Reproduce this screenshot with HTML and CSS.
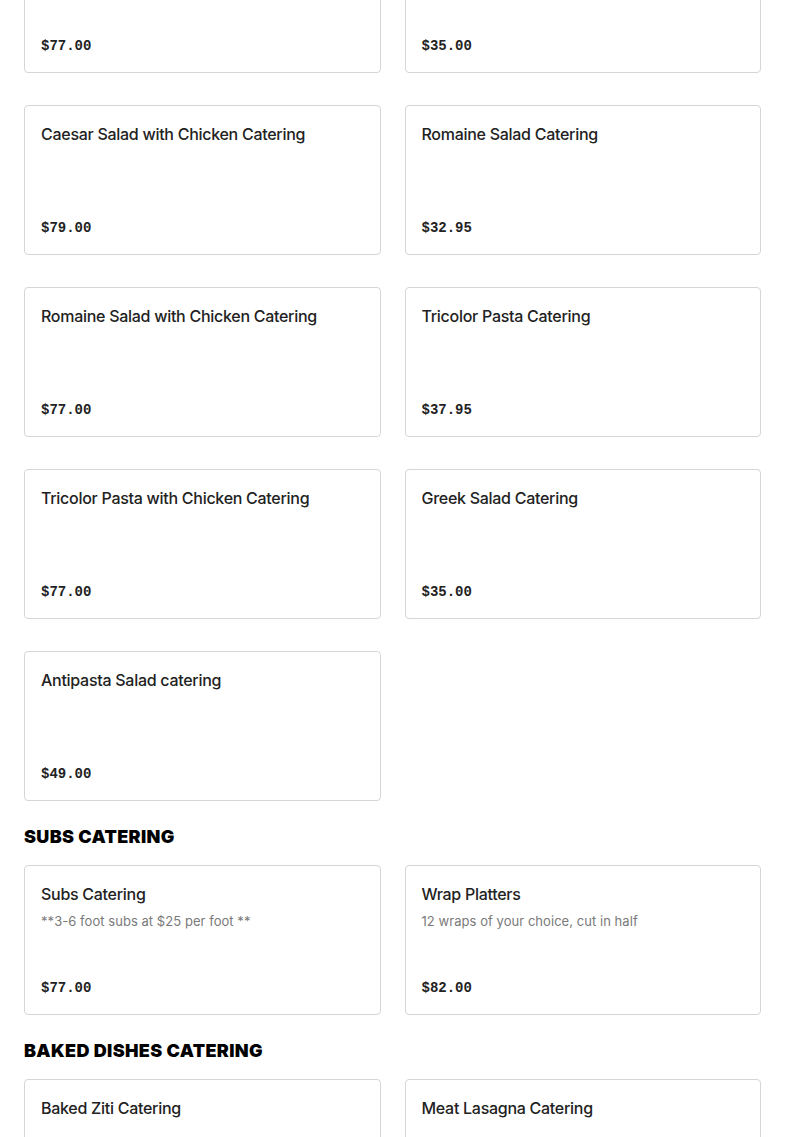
FILE: index.html
```html
<!DOCTYPE html>
<html lang="en">
<head>
<meta charset="utf-8">
<title>Catering Menu</title>
<link rel="stylesheet" href="styles.css">
</head>
<body>
<main class="menu">
  <section class="section section-first">
    <div class="grid">
      <div class="card"><div class="card-body"><h3 class="title">Garden Salad with Chicken Catering</h3></div><div class="price">$77.00</div></div>
      <div class="card"><div class="card-body"><h3 class="title">Caesar Salad Catering</h3></div><div class="price">$35.00</div></div>
      <div class="card"><div class="card-body"><h3 class="title">Caesar Salad with Chicken Catering</h3></div><div class="price">$79.00</div></div>
      <div class="card"><div class="card-body"><h3 class="title">Romaine Salad Catering</h3></div><div class="price">$32.95</div></div>
      <div class="card"><div class="card-body"><h3 class="title">Romaine Salad with Chicken Catering</h3></div><div class="price">$77.00</div></div>
      <div class="card"><div class="card-body"><h3 class="title">Tricolor Pasta Catering</h3></div><div class="price">$37.95</div></div>
      <div class="card"><div class="card-body"><h3 class="title">Tricolor Pasta with Chicken Catering</h3></div><div class="price">$77.00</div></div>
      <div class="card"><div class="card-body"><h3 class="title">Greek Salad Catering</h3></div><div class="price">$35.00</div></div>
      <div class="card"><div class="card-body"><h3 class="title">Antipasta Salad catering</h3></div><div class="price">$49.00</div></div>
    </div>
  </section>
  <section class="section">
    <h2 class="section-title">SUBS CATERING</h2>
    <div class="grid">
      <div class="card"><div class="card-body"><h3 class="title">Subs Catering</h3><p class="desc">**3-6 foot subs at $25 per foot **</p></div><div class="price">$77.00</div></div>
      <div class="card"><div class="card-body"><h3 class="title">Wrap Platters</h3><p class="desc">12 wraps of your choice, cut in half</p></div><div class="price">$82.00</div></div>
    </div>
  </section>
  <section class="section">
    <h2 class="section-title">BAKED DISHES CATERING</h2>
    <div class="grid">
      <div class="card"><div class="card-body"><h3 class="title">Baked Ziti Catering</h3></div><div class="price">$60.00</div></div>
      <div class="card"><div class="card-body"><h3 class="title">Meat Lasagna Catering</h3></div><div class="price">$85.00</div></div>
    </div>
  </section>
</main>
</body>
</html>
```
FILE: styles.css
```css
* { box-sizing: border-box; }
html, body { margin: 0; padding: 0; background: #fff; }
body {
  font-family: Inter, "Liberation Sans", Arial, sans-serif;
  color: #1f1f1f;
  overflow: hidden;
}
.menu {
  padding: 0 24px;
}
.section-first {
  margin-top: -77px;
}
.section {
  margin-bottom: 20px;
}
.section-title {
  margin: 0 0 12px;
  font-family: Inter, "Liberation Sans", sans-serif;
  font-weight: 900;
  font-size: 18px;
  line-height: 32px;
  letter-spacing: 0.35px;
  color: #000;
}
.grid {
  display: grid;
  grid-template-columns: 1fr 1fr;
  column-gap: 24px;
  row-gap: 32px;
}
.card {
  height: 150px;
  border: 1px solid #d6d6d6;
  border-radius: 4px;
  padding: 16px 16px 15px;
  display: flex;
  flex-direction: column;
  justify-content: space-between;
  background: #fff;
}
.title {
  margin: 0;
  font-size: 16px;
  font-weight: 500;
  line-height: 24px;
  color: #222;
  letter-spacing: -0.28px;
}
.desc {
  margin: 6px 0 0;
  font-size: 13px;
  line-height: 18px;
  color: #7a7a7a;
  letter-spacing: 0.05px;
}
.price {
  font-family: "Liberation Mono", "DejaVu Sans Mono", monospace;
  font-weight: 700;
  font-size: 14px;
  line-height: 22px;
  color: #222;
}
```
